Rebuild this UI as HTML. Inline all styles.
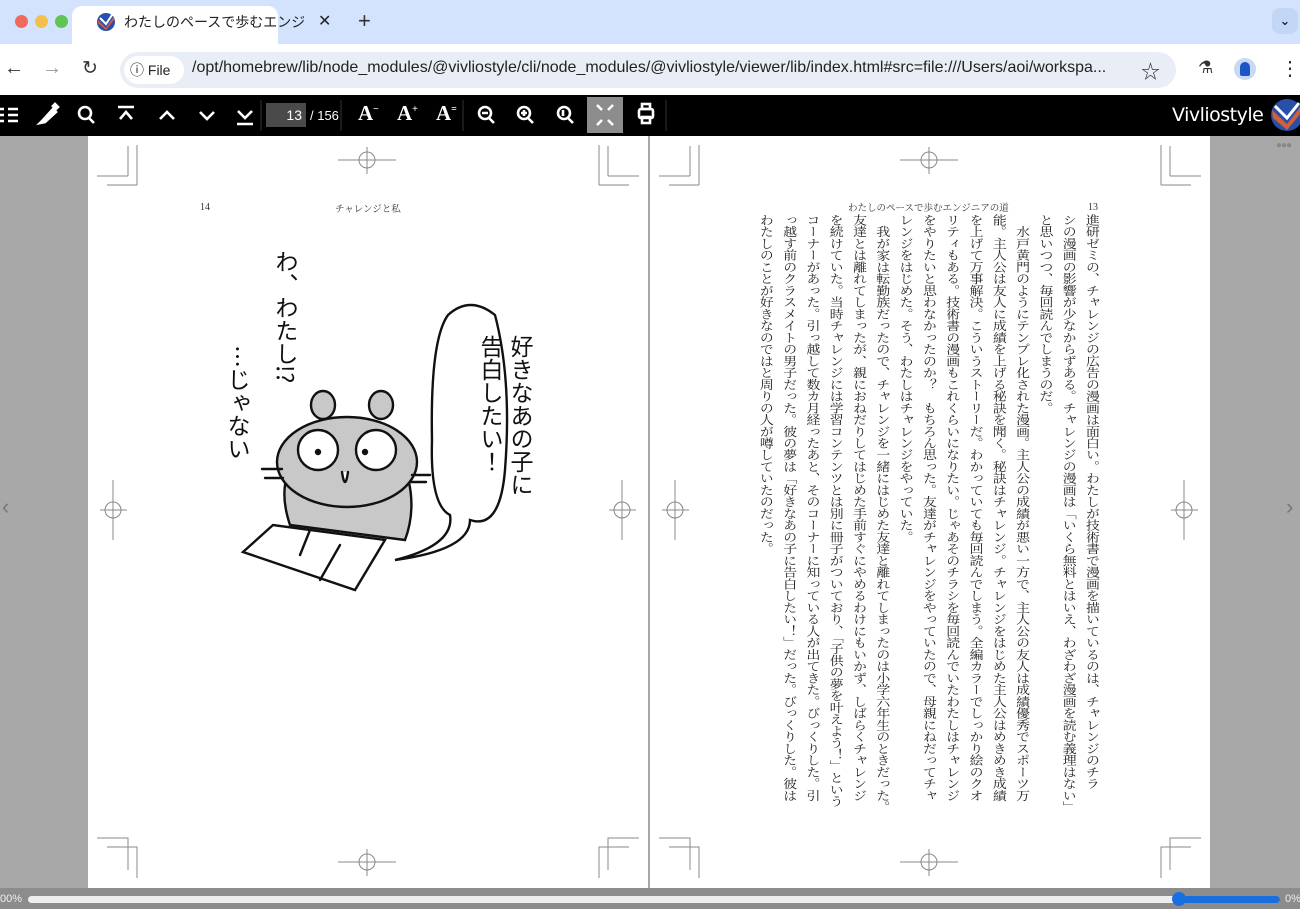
<!DOCTYPE html>
<html style="overflow:hidden;width:1300px;height:909px"><head><meta charset="utf-8"><style>
*{margin:0;padding:0;box-sizing:border-box}
body{width:1300px;height:909px;overflow:hidden;background:#a8a8a8;font-family:"Liberation Sans","Noto Sans CJK JP",sans-serif;position:relative}
.abs{position:absolute}
#tabs{left:0;top:0;width:1300px;height:44px;background:#d3e3fd}
#tab{left:72px;top:6px;width:206px;height:38px;background:#fff;border-radius:10px 10px 0 0}
#nav{left:0;top:44px;width:1300px;height:51px;background:#fff}
#url{left:120px;top:52px;width:1056px;height:36px;background:#e9eef6;border-radius:18px}
#vt{left:0;top:95px;width:1300px;height:41px;background:#000}
.page{background:#fff;top:136px;height:752px;width:560px}
#bot{left:0;top:888px;width:1300px;height:21px;background:#8c8c8c}
.vtext{writing-mode:vertical-rl;font-family:"Noto Serif CJK SC","Noto Serif CJK JP",serif;font-size:13.9px;line-height:23.3px;color:#222;white-space:nowrap;position:absolute;top:214px;right:196px;height:700px;transform:scaleY(0.845);transform-origin:top}
</style></head><body>
<div id="tabs" class="abs"></div>
<div class="abs" style="left:15px;top:15px;width:13px;height:13px;border-radius:50%;background:#ed6a5e"></div>
<div class="abs" style="left:35px;top:15px;width:13px;height:13px;border-radius:50%;background:#f5bf4f"></div>
<div class="abs" style="left:55px;top:15px;width:13px;height:13px;border-radius:50%;background:#61c554"></div>
<div id="tab" class="abs"></div>
<svg class="abs" style="left:96px;top:12px" width="20" height="20" viewBox="0 0 20 20"><circle cx="10" cy="10" r="9" fill="#2a4fa8"/><path d="M2 8 L10 16 L18 4 L18 8 L10 18 L2 11Z" fill="#d0603a"/><path d="M4 6 L10 12 L16 3" stroke="#fff" stroke-width="2" fill="none"/></svg>
<div class="abs" style="left:124px;top:12px;font-size:14px;color:#222;width:180px;overflow:hidden;white-space:nowrap">わたしのペースで歩むエンジニ</div>
<div class="abs" style="left:318px;top:11px;font-size:16px;color:#222">✕</div>
<div class="abs" style="left:358px;top:8px;font-size:22px;color:#333">+</div>
<div class="abs" style="left:1272px;top:8px;width:26px;height:26px;border-radius:8px;background:#c2d6f5;font-size:13px;text-align:center;line-height:26px">⌄</div>
<div id="nav" class="abs"></div>
<div class="abs" style="left:4px;top:57px;font-size:20px;color:#333">←</div>
<div class="abs" style="left:42px;top:57px;font-size:20px;color:#999">→</div>
<div class="abs" style="left:82px;top:57px;font-size:19px;color:#333">↻</div>
<div id="url" class="abs"></div>
<div class="abs" style="left:124px;top:56px;width:60px;height:28px;background:#fff;border-radius:14px;font-size:14px;line-height:28px;padding-left:6px;color:#222">ⓘ File</div>
<div class="abs" style="left:192px;top:59px;font-size:16px;color:#222">/opt/homebrew/lib/node_modules/@vivliostyle/cli/node_modules/@vivliostyle/viewer/lib/index.html#src=file:///Users/aoi/workspa...</div>
<div class="abs" style="left:1141px;top:57px;font-size:19px;color:#333">☆</div>
<div class="abs" style="left:1198px;top:58px;font-size:17px;color:#333">⚗</div>
<div class="abs" style="left:1234px;top:58px;width:22px;height:22px;border-radius:50%;background:#c9d8f3"></div>
<div class="abs" style="left:1240px;top:62px;width:10px;height:14px;border-radius:5px 5px 2px 2px;background:#1a56c8"></div>
<div class="abs" style="left:1280px;top:56px;font-size:20px;color:#333">⋮</div>
<div id="vt" class="abs"></div>
<div class="abs" style="left:266px;top:103px;width:40px;height:24px;background:#4a4a4a;color:#fff;font-size:14px;text-align:right;line-height:24px;padding-right:4px">13</div>
<div class="abs" style="left:310px;top:108px;color:#fff;font-size:13px">/ 156</div>
<div class="abs" style="left:587px;top:97px;width:36px;height:36px;background:#8c8c8c"></div>
<svg class="abs" style="left:0;top:95px" width="680" height="41" viewBox="0 0 680 41" fill="none" stroke="#fff" stroke-width="2.6">
<path d="M0 14h4M0 20h4M0 26h4M8 14h10M8 20h10M8 26h10"/>
<path d="M40 28l3-3 10-11 3 3-11 10zM52 12l3-3 3 3-3 3" fill="#fff"/>
<circle cx="85" cy="18" r="6"/><path d="M89 23l5 5"/>
<path d="M118 12h16M120 24l6-7 6 7"/>
<path d="M160 24l7-7 7 7"/>
<path d="M200 17l7 7 7-7"/>
<path d="M238 16l7 7 7-7M237 29h16"/>
<path d="M261 5v31M341 5v31M463 5v31M666 5v31" stroke="#333" stroke-width="1"/>
<circle cx="485" cy="18" r="6"/><path d="M489 23l5 5M482 18h6"/>
<circle cx="524" cy="18" r="6"/><path d="M528 23l5 5M521 18h6M524 15v6"/>
<circle cx="564" cy="18" r="6"/><path d="M568 23l5 5M563 15v6"/>
<path d="M597 10l5 5M613 10l-5 5M597 30l5-5M613 30l-5-5"/>
<rect x="639" y="14" width="14" height="9" rx="2"/><rect x="642" y="9" width="8" height="5"/><rect x="642" y="22" width="8" height="6"/>
</svg>
<div class="abs" style="left:358px;top:101px;color:#fff;font-family:'Liberation Serif',serif;font-size:21px;font-weight:bold">A<sup style="font-size:10px">−</sup></div>
<div class="abs" style="left:397px;top:101px;color:#fff;font-family:'Liberation Serif',serif;font-size:21px;font-weight:bold">A<sup style="font-size:10px">+</sup></div>
<div class="abs" style="left:436px;top:101px;color:#fff;font-family:'Liberation Serif',serif;font-size:21px;font-weight:bold">A<sup style="font-size:10px">=</sup></div>
<div class="abs" style="left:1172px;top:104px;color:#fff;font-size:19px;font-family:'DejaVu Sans',sans-serif;letter-spacing:-0.5px">Vivliostyle</div>
<svg class="abs" style="left:1270px;top:98px" width="32" height="34" viewBox="0 0 32 34"><circle cx="17" cy="17" r="16" fill="#2a4fa8"/><path d="M2 12 L17 26 L31 8 L31 15 L17 32 L3 20Z" fill="#d0603a"/><path d="M5 8 L17 20 L29 5" stroke="#fff" stroke-width="3" fill="none"/></svg>
<div class="abs" style="left:1276px;top:140px;font-size:10px;color:#888;letter-spacing:-1px">●●●</div>
<div class="abs page" style="left:88px"></div>
<div class="abs page" style="left:650px"></div>
<div class="abs" style="left:2px;top:494px;font-size:22px;color:#777">‹</div>
<div class="abs" style="left:1286px;top:494px;font-size:22px;color:#777">›</div>
<svg class="abs" style="left:0;top:0" width="1300" height="909" fill="none" stroke="#888" stroke-width="1">
<g id="cm">
<path d="M97 176h31M128 176v-30M107 185h30M137 185v-40" />
<path d="M639 176h-31M608 176v-30M629 185h-30M599 185v-40"/>
<path d="M97 838h31v32M107 847h30v31"/>
<path d="M639 838h-31v32M629 847h-30v31"/>
<path d="M338 160h58M367 147v27"/><circle cx="367" cy="160" r="8"/>
<path d="M338 862h58M367 849v27"/><circle cx="367" cy="862" r="8"/>
<path d="M100 510h27M113 480v60"/><circle cx="113" cy="510" r="8"/>
<path d="M609 510h27M622 480v60"/><circle cx="622" cy="510" r="8"/>
</g>
<use href="#cm" x="562"/>
</svg>
<div class="abs" style="left:200px;top:202px;font-family:'Liberation Serif',serif;font-size:10px;color:#333">14</div>
<div class="abs" style="left:335px;top:201px;font-family:'Noto Serif CJK SC',serif;font-size:9.5px;color:#333">チャレンジと私</div>
<div class="abs" style="left:848px;top:200px;font-family:'Noto Serif CJK SC',serif;font-size:9.5px;color:#333">わたしのペースで歩むエンジニアの道</div>
<div class="abs" style="left:1088px;top:202px;font-family:'Liberation Serif',serif;font-size:10px;color:#333">13</div>
<svg class="abs" style="left:0;top:0" width="650" height="909" fill="none" stroke="#111" stroke-width="2.4" stroke-linecap="round">
<path d="M290 525 Q275 480 300 455 L400 455 Q420 500 405 540Z" fill="#c8c8c8"/>
<ellipse cx="323" cy="405" rx="12" ry="14" fill="#c8c8c8"/>
<ellipse cx="381" cy="405" rx="12" ry="14" fill="#c8c8c8"/>
<ellipse cx="347" cy="462" rx="70" ry="45" fill="#c8c8c8"/>
<circle cx="318" cy="450" r="20" fill="#fff"/><circle cx="376" cy="450" r="20" fill="#fff"/>
<circle cx="318" cy="452" r="2" fill="#111"/><circle cx="365" cy="452" r="2" fill="#111"/>
<path d="M342 472 q3 20 6 0" fill="#fff"/>
<path d="M262 469h20M265 478h18M412 475h18M411 482h15"/>
<path d="M243 552 L273 525 L385 540 L355 590Z" fill="#fff"/>
<path d="M300 555 L310 530M340 545 L320 580"/>
<path d="M448 315 Q470 295 495 315 Q512 380 505 470 Q500 530 470 520 Q470 550 395 560 Q455 545 450 515 Q430 505 432 440 Q430 340 448 315Z" fill="#fff"/>
</svg>
<div class="abs" style="left:477px;top:335px;writing-mode:vertical-rl;font-size:23px;line-height:30px;color:#111;font-family:'Noto Sans CJK JP',sans-serif">好きなあの子に<br>告白したい！</div>
<div class="abs" style="left:272px;top:250px;writing-mode:vertical-rl;font-size:23px;line-height:30px;color:#111;font-family:'Noto Sans CJK JP',sans-serif">わ、わたし!?</div>
<div class="abs" style="left:224px;top:345px;writing-mode:vertical-rl;font-size:23px;line-height:30px;color:#111;font-family:'Noto Sans CJK JP',sans-serif">…じゃない</div>
<div class="vtext">
<div>進研ゼミの、チャレンジの広告の漫画は面白い。わたしが技術書で漫画を描いているのは、チャレンジのチラ</div>
<div>シの漫画の影響が少なからずある。チャレンジの漫画は「いくら無料とはいえ、わざわざ漫画を読む義理はない」</div>
<div>と思いつつ、毎回読んでしまうのだ。</div>
<div>　水戸黄門のようにテンプレ化された漫画。主人公の成績が悪い一方で、主人公の友人は成績優秀でスポーツ万</div>
<div>能。主人公は友人に成績を上げる秘訣を聞く。秘訣はチャレンジ。チャレンジをはじめた主人公はめきめき成績</div>
<div>を上げて万事解決。こういうストーリーだ。わかっていても毎回読んでしまう。全編カラーでしっかり絵のクオ</div>
<div>リティもある。技術書の漫画もこれくらいになりたい。じゃあそのチラシを毎回読んでいたわたしはチャレンジ</div>
<div>をやりたいと思わなかったのか？　もちろん思った。友達がチャレンジをやっていたので、母親にねだってチャ</div>
<div>レンジをはじめた。そう、わたしはチャレンジをやっていた。</div>
<div>　我が家は転勤族だったので、チャレンジを一緒にはじめた友達と離れてしまったのは小学六年生のときだった。</div>
<div>友達とは離れてしまったが、親におねだりしてはじめた手前すぐにやめるわけにもいかず、しばらくチャレンジ</div>
<div>を続けていた。当時チャレンジには学習コンテンツとは別に冊子がついており、「子供の夢を叶えよう！」という</div>
<div>コーナーがあった。引っ越して数カ月経ったあと、そのコーナーに知っている人が出てきた。びっくりした。引</div>
<div>っ越す前のクラスメイトの男子だった。彼の夢は「好きなあの子に告白したい！」だった。びっくりした。彼は</div>
<div>わたしのことが好きなのではと周りの人が噂していたのだった。</div>
</div>
<div id="bot" class="abs"></div>
<div class="abs" style="left:0;top:893px;font-size:11px;color:#eee">00%</div>
<div class="abs" style="left:28px;top:896px;width:1252px;height:7px;border-radius:4px;background:#eee"></div>
<div class="abs" style="left:1172px;top:892px;width:14px;height:14px;border-radius:50%;background:#1a6fe0"></div>
<div class="abs" style="left:1180px;top:896px;width:100px;height:7px;border-radius:4px;background:#1a6fe0"></div>
<div class="abs" style="left:1285px;top:893px;font-size:11px;color:#eee">0%</div>
</body></html>
